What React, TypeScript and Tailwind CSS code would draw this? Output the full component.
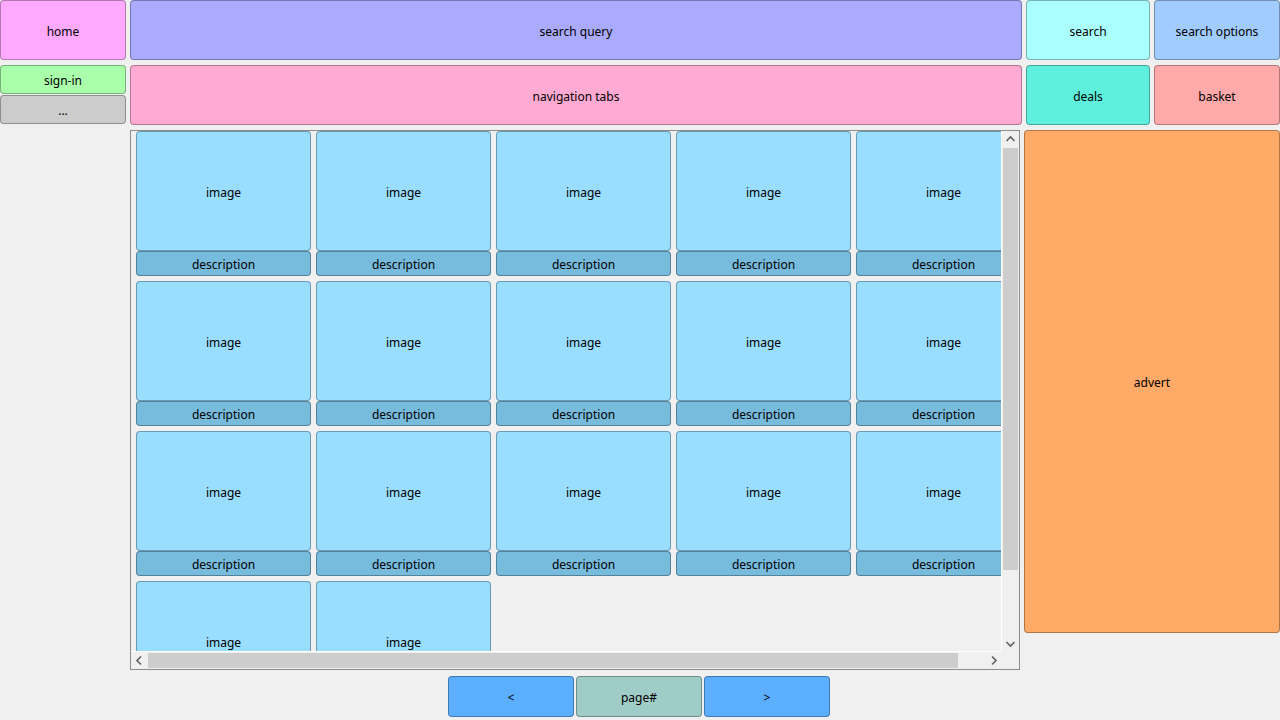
import React from "react";

const font = { fontFamily: '"Segoe UI", "Noto Sans", sans-serif' };

function Box({ label, className }: { label: string; className: string }) {
  return (
    <div
      className={`flex items-center justify-center rounded-[4px] border border-black/30 pt-[3px] text-[12px] leading-none text-black ${className}`}
    >
      {label}
    </div>
  );
}

function Chevron({ dir }: { dir: "up" | "down" | "left" | "right" }) {
  const pts = {
    up: "4.5,10 8.5,6 12.5,10",
    down: "4.5,7 8.5,11 12.5,7",
    left: "10,4.5 6,8.5 10,12.5",
    right: "7,4.5 11,8.5 7,12.5",
  }[dir];
  return (
    <svg width="17" height="17" viewBox="0 0 17 17" className="shrink-0">
      <polyline points={pts} fill="none" stroke="#606060" strokeWidth="1.6" />
    </svg>
  );
}

function Card() {
  return (
    <div className="flex w-[175px] flex-col">
      <Box label="image" className="h-[120px] bg-[#99ddff]" />
      <Box label="description" className="h-[25px] bg-[#77bbdd]" />
    </div>
  );
}

export default function App() {
  const cards = Array.from({ length: 17 });

  return (
    <div className="h-[720px] w-[1280px] overflow-hidden bg-[#f0f0f0]" style={font}>
      {/* Top bars */}
      <div className="grid h-[125px] grid-cols-[126px_892px_124px_126px] grid-rows-[60px_60px] gap-x-1 gap-y-[5px]">
        <Box label="home" className="bg-[#ffaaff]" />
        <Box label="search query" className="bg-[#aaaaff]" />
        <Box label="search" className="bg-[#aaffff]" />
        <Box label="search options" className="bg-[#a0ccff]" />
        <div className="flex flex-col gap-px">
          <Box label="sign-in" className="h-[29px] bg-[#aaffaa]" />
          <Box label="..." className="h-[29px] bg-[#cccccc]" />
        </div>
        <Box label="navigation tabs" className="bg-[#ffaad2]" />
        <Box label="deals" className="bg-[#5eefdd]" />
        <Box label="basket" className="bg-[#ffaaaa]" />
      </div>

      {/* Main */}
      <div className="mt-[5px] flex gap-1">
        <div className="w-[126px] shrink-0" />

        {/* Scroll area */}
        <div className="flex h-[540px] w-[890px] shrink-0 flex-col border border-[#8c8c8c]">
          <div className="flex min-h-0 flex-1">
            <div className="flex-1 overflow-hidden border-b border-r border-white">
              <div className="grid w-[900px] grid-cols-[175px_175px_175px_175px_175px] gap-[5px] pl-[5px]">
                {cards.map((_, i) => (
                  <Card key={i} />
                ))}
              </div>
            </div>
            <div className="flex w-[17px] flex-col bg-[#f0f0f0]">
              <Chevron dir="up" />
              <div className="mx-px h-[422px] bg-[#cdcdcd]" />
              <div className="flex-1" />
              <Chevron dir="down" />
            </div>
          </div>
          <div className="flex h-[17px]">
            <div className="flex flex-1 items-center bg-[#f0f0f0]">
              <Chevron dir="left" />
              <div className="h-[15px] w-[810px] bg-[#cdcdcd]" />
              <div className="flex-1" />
              <Chevron dir="right" />
            </div>
            <div className="w-[17px] bg-[#f0f0f0]" />
          </div>
        </div>

        <Box label="advert" className="h-[503px] w-[256px] shrink-0 bg-[#ffaa66]" />
      </div>

      {/* Pagination */}
      <div className="mt-[6px] flex justify-center gap-0.5 pr-[2px]">
        <Box label="<" className="h-[41px] w-[126px] bg-[#5caeff]" />
        <Box label="page#" className="h-[41px] w-[126px] bg-[#a0ccc8]" />
        <Box label=">" className="h-[41px] w-[126px] bg-[#5caeff]" />
      </div>
    </div>
  );
}
